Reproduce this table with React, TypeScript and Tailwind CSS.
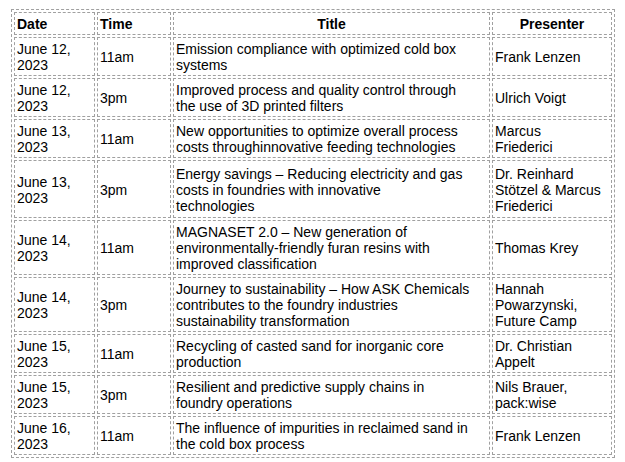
const rows: { date: string; time: string; title: string[]; presenter: string[]; tall?: boolean }[] = [
  { date: "June 12,", time: "11am", title: ["Emission compliance with optimized cold box", "systems"], presenter: ["Frank Lenzen"] },
  { date: "June 12,", time: "3pm", title: ["Improved process and quality control through", "the use of 3D printed filters"], presenter: ["Ulrich Voigt"] },
  { date: "June 13,", time: "11am", title: ["New opportunities to optimize overall process", "costs throughinnovative feeding technologies"], presenter: ["Marcus", "Friederici"] },
  { date: "June 13,", time: "3pm", title: ["Energy savings – Reducing electricity and gas", "costs in foundries with innovative", "technologies"], presenter: ["Dr. Reinhard", "Stötzel & Marcus", "Friederici"], tall: true },
  { date: "June 14,", time: "11am", title: ["MAGNASET 2.0 – New generation of", "environmentally-friendly furan resins with", "improved classification"], presenter: ["Thomas Krey"] },
  { date: "June 14,", time: "3pm", title: ["Journey to sustainability – How ASK Chemicals", "contributes to the foundry industries", "sustainability transformation"], presenter: ["Hannah", "Powarzynski,", "Future Camp"] },
  { date: "June 15,", time: "11am", title: ["Recycling of casted sand for inorganic core", "production"], presenter: ["Dr. Christian", "Appelt"] },
  { date: "June 15,", time: "3pm", title: ["Resilient and predictive supply chains in", "foundry operations"], presenter: ["Nils Brauer,", "pack:wise"] },
  { date: "June 16,", time: "11am", title: ["The influence of impurities in reclaimed sand in", "the cold box process"], presenter: ["Frank Lenzen"] },
]

const cell = "border border-dashed border-[#a0a0a0] px-[2px] pt-[3px] pb-[2px] align-middle leading-4"

const Lines = ({ lines }: { lines: string[] }) => (
  <>
    {lines.map((l, i) => (
      <span key={i}>
        {i > 0 && <br />}
        {l}
      </span>
    ))}
  </>
)

export default function App() {
  return (
    <div className="bg-white w-[625px] h-[462px] pt-[9px] pl-[11px] text-[14px] text-black" style={{ fontFamily: '"Liberation Sans", Arial, sans-serif' }}>
      <table className="table-fixed w-[604px] border-separate border-spacing-[2px] border border-dashed border-[#a0a0a0]">
        <colgroup>
          <col className="w-[81px]" />
          <col className="w-[74px]" />
          <col className="w-[317px]" />
          <col className="w-[120px]" />
        </colgroup>
        <thead>
          <tr>
            <th className={`${cell} text-left font-bold`}>Date</th>
            <th className={`${cell} text-left font-bold`}>Time</th>
            <th className={`${cell} text-center font-bold`}>Title</th>
            <th className={`${cell} text-center font-bold`}>Presenter</th>
          </tr>
        </thead>
        <tbody>
          {rows.map((r, i) => (
            <tr key={i}>
              <td className={`${cell} ${r.tall ? "h-[58px]" : ""}`}>
                <Lines lines={[r.date, "2023"]} />
              </td>
              <td className={cell}>{r.time}</td>
              <td className={cell}>
                <Lines lines={r.title} />
              </td>
              <td className={cell}>
                <Lines lines={r.presenter} />
              </td>
            </tr>
          ))}
        </tbody>
      </table>
    </div>
  )
}
